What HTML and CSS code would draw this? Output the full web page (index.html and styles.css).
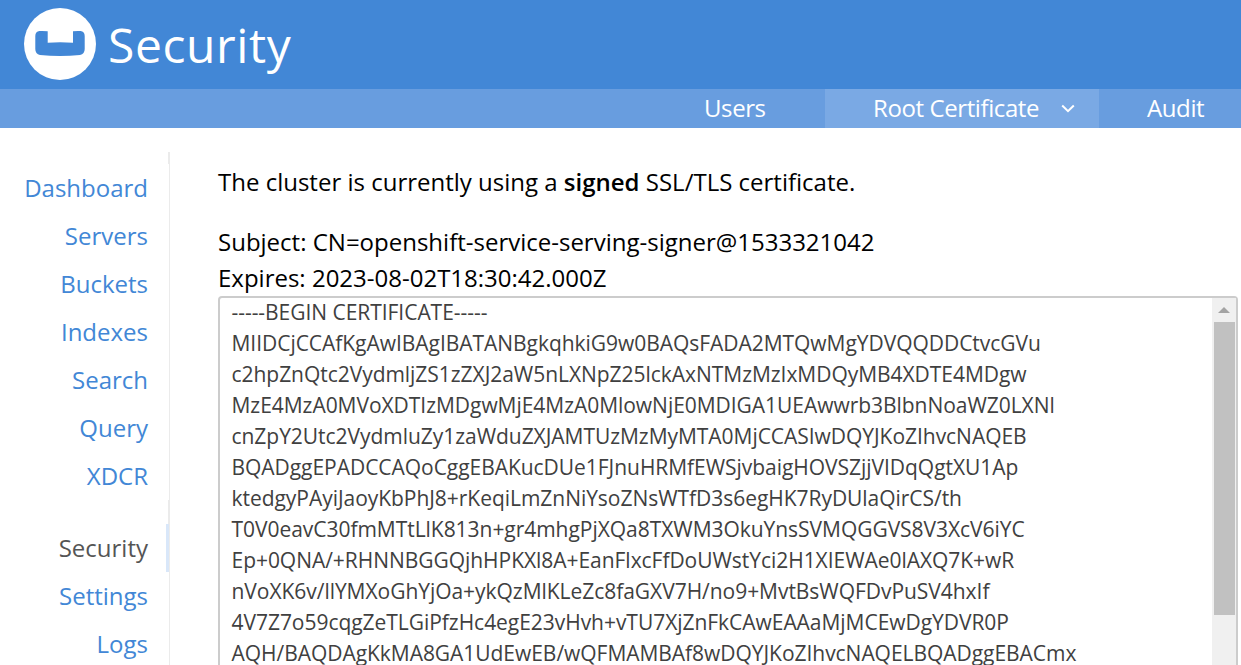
FILE: index.html
```html
<!DOCTYPE html>
<html lang="en">
<head>
<meta charset="utf-8">
<title>Security</title>
<link rel="stylesheet" href="styles.css">
</head>
<body>
<header class="header">
  <svg class="logo" viewBox="0 0 72 72" width="72" height="72">
    <circle cx="36" cy="36" r="36" fill="#fff"/>
    <path d="M15.500 23 Q11.300 23.500 11.300 28 V41 Q11.300 46 16 47 Q36 49 56 47 Q60.700 46 60.700 41 V28 Q60.700 23.500 56.500 23 Q53 22.800 49 23.200 V34.800 Q36 33.600 23.700 34.800 V23.200 Q19 22.800 15.500 23Z" fill="#4287d6"/>
  </svg>
  <h1 class="title">Security</h1>
</header>
<nav class="tabs">
  <a class="tab users">Users</a>
  <a class="tab active">Root Certificate
    <svg class="chevron" viewBox="0 0 14 9" width="14" height="9"><path d="M1.200 1.500 L7 7.200 L12.800 1.500" fill="none" stroke="#fff" stroke-width="2"/></svg>
  </a>
  <a class="tab audit">Audit</a>
</nav>
<div class="page">
  <nav class="sidebar">
    <div class="spacer first"></div>
    <a>Dashboard</a>
    <a>Servers</a>
    <a>Buckets</a>
    <a>Indexes</a>
    <a>Search</a>
    <a>Query</a>
    <a>XDCR</a>
    <div class="spacer"></div>
    <a class="current">Security</a>
    <a>Settings</a>
    <a>Logs</a>
  </nav>
  <main class="content">
    <p class="status">The cluster is currently using a <strong>signed</strong> SSL/TLS certificate.</p>
    <p class="details">Subject: CN=openshift-service-serving-signer@1533321042<br>Expires: 2023-08-02T18:30:42.000Z</p>
    <div class="certificate">
<pre class="pem">-----BEGIN CERTIFICATE-----
MIIDCjCCAfKgAwIBAgIBATANBgkqhkiG9w0BAQsFADA2MTQwMgYDVQQDDCtvcGVu
c2hpZnQtc2VydmljZS1zZXJ2aW5nLXNpZ25lckAxNTMzMzIxMDQyMB4XDTE4MDgw
MzE4MzA0MVoXDTIzMDgwMjE4MzA0MlowNjE0MDIGA1UEAwwrb3BlbnNoaWZ0LXNl
cnZpY2Utc2VydmluZy1zaWduZXJAMTUzMzMyMTA0MjCCASIwDQYJKoZIhvcNAQEB
BQADggEPADCCAQoCggEBAKucDUe1FJnuHRMfEWSjvbaigHOVSZjjVIDqQgtXU1Ap
ktedgyPAyiJaoyKbPhJ8+rKeqiLmZnNiYsoZNsWTfD3s6egHK7RyDUlaQirCS/th
T0V0eavC30fmMTtLlK813n+gr4mhgPjXQa8TXWM3OkuYnsSVMQGGVS8V3XcV6iYC
Ep+0QNA/+RHNNBGGQjhHPKXl8A+EanFlxcFfDoUWstYci2H1XIEWAe0lAXQ7K+wR
nVoXK6v/llYMXoGhYjOa+ykQzMlKLeZc8faGXV7H/no9+MvtBsWQFDvPuSV4hxIf
4V7Z7o59cqgZeTLGiPfzHc4egE23vHvh+vTU7XjZnFkCAwEAAaMjMCEwDgYDVR0P
AQH/BAQDAgKkMA8GA1UdEwEB/wQFMAMBAf8wDQYJKoZIhvcNAQELBQADggEBACmx</pre>
      <div class="scrollbar">
        <svg class="arrow" viewBox="0 0 12 6" width="12" height="6"><path d="M6 0 L12 6 H0Z" fill="#a3a3a3"/></svg>
        <div class="thumb"></div>
      </div>
    </div>
  </main>
</div>
</body>
</html>
```
FILE: styles.css
```css
* { box-sizing: border-box; }
body {
  margin: 0;
  height: 665px;
  overflow: hidden;
  background: #fff;
  color: #000;
  font: 24px/36px "Open Sans", "Noto Sans", sans-serif;
}
.header {
  display: flex;
  align-items: flex-start;
  height: 89px;
  padding: 8px 24px 0;
  background: #4287d6;
  color: #fff;
}
.logo { flex: none; }
.title {
  margin: 1px 0 0 12px;
  font-size: 48px;
  line-height: 72px;
  font-weight: 400;
  letter-spacing: 0.6px;
}
.tabs {
  display: flex;
  justify-content: flex-end;
  height: 39px;
  background: #689ddf;
  color: #fff;
  font-size: 24px;
  letter-spacing: -0.4px;
  line-height: 38px;
}
.tab { display: flex; align-items: flex-start; white-space: nowrap; }
.users { width: 121px; }
.active { width: 274px; padding-left: 48px; background: #7aa9e4; }
.chevron { margin: 15px 0 0 22px; }
.audit { width: 142px; padding-left: 48px; }
.page { display: flex; height: 537px; padding-top: 24px; }
.sidebar {
  display: flex;
  flex-direction: column;
  width: 170px;
  border-right: 1px solid #ebebeb;
  line-height: 48px;
  text-align: right;
  color: #4287d6;
}
.sidebar a { flex: none; padding-right: 21px; }
.sidebar .current { border-right: 3px solid #d9e7f9; padding-right: 18px; color: #555; }
.spacer { flex: none; height: 24px; border-right: 1px solid #ebebeb; }
.first { height: 12px; }
.content { width: 1020px; margin-left: 48px; padding-top: 12px; }
.status { margin: 0 0 24px; }
.status strong { font-weight: 600; }
.details { margin: 0; }
.certificate {
  display: flex;
  justify-content: space-between;
  height: 369px;
  border: 2px solid #ccc;
  border-bottom: 0;
  border-radius: 4px 4px 0 0;
}
.pem {
  margin: -1px 0 0;
  padding-left: 11.5px;
  color: #404040;
  font: 400 21px/31px "Open Sans", "Noto Sans", sans-serif;
  letter-spacing: -0.04px;
}
.scrollbar {
  display: flex;
  flex-direction: column;
  align-items: center;
  width: 24px;
  background: #f0f0f0;
}
.arrow { margin-top: 9px; }
.thumb { width: 21px; height: 293px; margin-top: 9px; background: #c1c1c1; }
```
